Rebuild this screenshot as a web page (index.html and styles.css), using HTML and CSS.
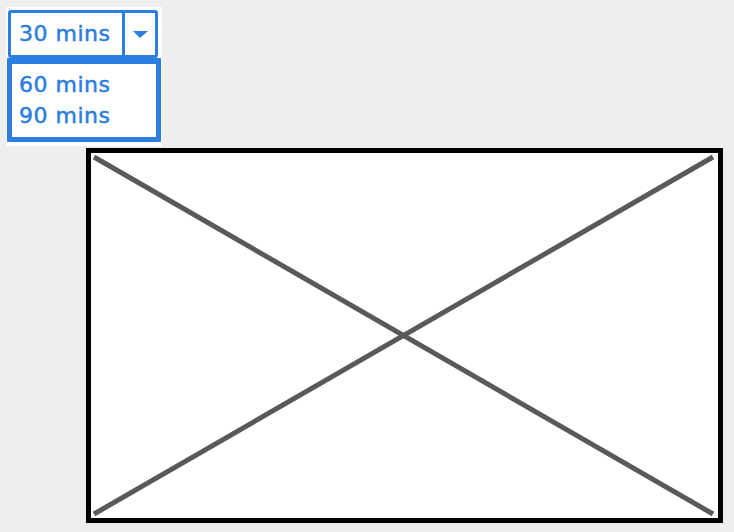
FILE: index.html
```html
<!DOCTYPE html>
<html>
<head>
<meta charset="utf-8">
<link rel="stylesheet" href="styles.css">
</head>
<body>
<div class="page">
  <div class="panel">
    <div class="combo">
      <div class="combo-label">30 mins</div>
      <div class="combo-arrow"><span class="tri"></span></div>
    </div>
    <div class="list">
      <div class="item">60 mins</div>
      <div class="item">90 mins</div>
    </div>
  </div>
  <div class="placeholder">
    <svg width="637" height="375" viewBox="0 0 637 375">
      <rect x="2.5" y="2.5" width="632" height="370" fill="#fff" stroke="#000" stroke-width="5"/>
      <line x1="8" y1="9" x2="627" y2="366" stroke="#595959" stroke-width="5"/>
      <line x1="8" y1="366" x2="627" y2="9" stroke="#595959" stroke-width="5"/>
    </svg>
  </div>
</div>
</body>
</html>
```
FILE: styles.css
```css
html, body {
  margin: 0;
  padding: 0;
  background: #eeeeee;
}
.page {
  display: flex;
  flex-direction: column;
  align-items: flex-start;
  font-family: "DejaVu Sans", "Liberation Sans", sans-serif;
  color: #2b7de0;
}
.panel {
  margin: 7px 0 0 6px;
  width: 156px;
  background: #fff;
  padding: 3px 0 4px 1px;
  box-sizing: border-box;
  display: flex;
  flex-direction: column;
}
.combo {
  margin-left: 1px;
  width: 150px;
  height: 48px;
  box-sizing: border-box;
  border: 3px solid #2b7de0;
  border-radius: 3px;
  display: flex;
}
.combo-label {
  flex: 1;
  font-size: 22px;
  line-height: 42px;
  padding-left: 8px;
  letter-spacing: 0.5px;
  -webkit-text-stroke: 0.5px #2b7de0;
}
.combo-arrow {
  width: 30px;
  border-left: 3px solid #2b7de0;
  display: flex;
  align-items: center;
  justify-content: center;
}
.tri {
  width: 0;
  height: 0;
  border-left: 7px solid transparent;
  border-right: 8px solid transparent;
  border-top: 7px solid #2b7de0;
}
.list {
  width: 154px;
  height: 84px;
  box-sizing: border-box;
  border: 5px solid #2b7de0;
  border-top-width: 6px;
  padding: 5px 0 0 7px;
}
.item {
  font-size: 22px;
  line-height: 31px;
  letter-spacing: 0.5px;
  -webkit-text-stroke: 0.5px #2b7de0;
}
.placeholder {
  margin: 2px 0 0 86px;
  display: flex;
}
.placeholder svg {
  display: block;
}
```
